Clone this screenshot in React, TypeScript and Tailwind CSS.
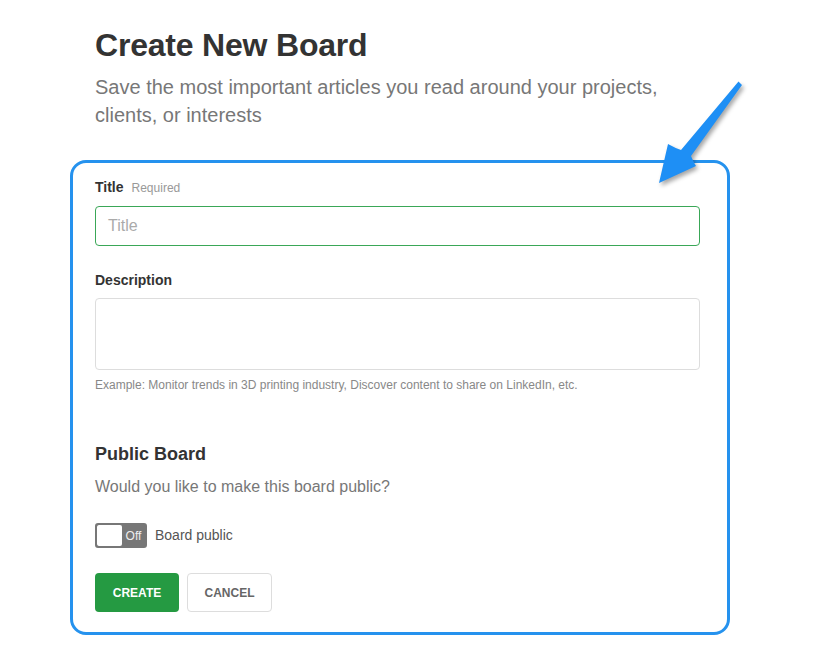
import React from "react";

// form page with callout arrow pointing at the card
const FONT = { fontFamily: '"Liberation Sans", Arial, sans-serif' };

function Arrow() {
  return (
    <svg
      className="absolute left-0 top-0 pointer-events-none"
      width={822}
      height={650}
      viewBox="0 0 822 650"
      style={{ filter: "drop-shadow(2px 3px 2px rgba(0,0,0,0.35))" }}
    >
      <path
        d="M738.5,81.5 L742,85 L691,156 Q694,163 696,166 L659,183 L668,144 Q675,148 681,150 Z"
        fill="#1e8ff5"
      />
    </svg>
  );
}

function Toggle() {
  return (
    <div className="flex h-[25px] w-[52px] overflow-hidden rounded-[3px] border-2 border-[#777] bg-[#777]">
      <div className="h-full w-[25px] rounded-[2px] bg-white" />
      <div className="flex flex-1 items-center justify-center text-[12px] text-[#eee]">Off</div>
    </div>
  );
}

export default function App() {
  return (
    <div className="relative h-[650px] w-[822px] bg-white" style={FONT}>
      <div className="pt-[25px]">
        <div className="pl-[95px]">
          <h1 className="text-[32px] leading-[40px] font-bold tracking-[-0.2px] text-[#333]">Create New Board</h1>
          <p className="mt-[8px] max-w-[600px] text-[20px] leading-[28px] text-[#777]">
            Save the most important articles you read around your projects, clients, or interests
          </p>
        </div>

        <div className="ml-[70px] mt-[31px] w-[660px] rounded-[16px] border-[3px] border-[#2592ee] pl-[22px] pr-[27px] pt-[14px] pb-[20px]">
          <div className="flex items-baseline gap-[8px] leading-[20px]">
            <span className="text-[14px] font-bold text-[#333]">Title</span>
            <span className="text-[12px] text-[#999]">Required</span>
          </div>
          <div className="mt-[8px] flex h-[40px] items-center rounded-[4px] border border-[#3aa757] px-[12px] text-[16px] text-[#aaa]">
            Title
          </div>

          <div className="mt-[24px] text-[14px] leading-[20px] font-bold text-[#333]">Description</div>
          <div className="mt-[8px] h-[72px] rounded-[4px] border border-[#ddd]" />
          <p className="mt-[7px] text-[12px] leading-[16px] text-[#888]">
            Example: Monitor trends in 3D printing industry, Discover content to share on LinkedIn, etc.
          </p>

          <h2 className="mt-[49px] text-[18px] leading-[24px] font-bold text-[#333]">Public Board</h2>
          <p className="mt-[9px] text-[16px] leading-[24px] text-[#777]">Would you like to make this board public?</p>

          <div className="mt-[24px] flex items-center gap-[8px]">
            <Toggle />
            <span className="text-[14px] text-[#555]">Board public</span>
          </div>

          <div className="mt-[25px] flex gap-[8px]">
            <button className="h-[39px] w-[84px] rounded-[4px] bg-[#259a42] text-[12px] font-bold text-white">
              CREATE
            </button>
            <button className="h-[39px] w-[85px] rounded-[4px] border border-[#ddd] bg-white text-[12px] font-bold text-[#666]">
              CANCEL
            </button>
          </div>
        </div>
      </div>
      <Arrow />
    </div>
  );
}
